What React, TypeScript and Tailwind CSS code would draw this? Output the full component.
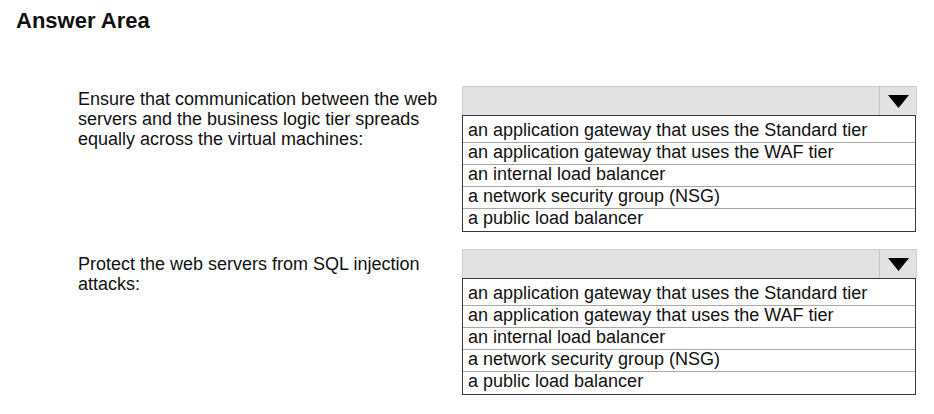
import React from 'react';

const options = [
  'an application gateway that uses the Standard tier',
  'an application gateway that uses the WAF tier',
  'an internal load balancer',
  'a network security group (NSG)',
  'a public load balancer',
];

const questions = [
  {
    label: 'Ensure that communication between the web servers and the business logic tier spreads equally across the virtual machines:',
    pad: 'pt-[3px]',
  },
  {
    label: 'Protect the web servers from SQL injection attacks:',
    pad: 'pt-[5px]',
  },
];

const Dropdown: React.FC = () => (
  <div className="w-[455px] flex flex-col">
    <div className="h-[29px] flex bg-[#e2e2e2] border border-[#cfcfcf] border-b-0">
      <div className="flex-1" />
      <div className="w-[37px] border-l border-[#c4c4c4] flex items-center justify-center">
        <svg width="21" height="13" viewBox="0 0 21 13">
          <polygon points="0,0 21,0 10.5,13" fill="#000" />
        </svg>
      </div>
    </div>
    <div className="w-[454px] border border-[#3a3a3a] bg-white pt-[5px]">
      {options.map((opt, i) => (
        <div
          key={opt}
          className={`h-[22px] pl-[5px] text-[18px] leading-[19px] text-[#111] ${i < options.length - 1 ? 'border-b border-[#a8a8a8]' : ''}`}
        >
          {opt}
        </div>
      ))}
    </div>
  </div>
);

export default function App() {
  return (
    <div className="w-[934px] h-[414px] bg-white" style={{ fontFamily: '"Liberation Sans", Arial, sans-serif' }}>
      <div className="pt-[8px] pl-[16px]">
        <h1 className="text-[22px] leading-[26px] font-bold text-[#111]">Answer Area</h1>
      </div>
      <div className="mt-[52px] flex flex-col gap-[17px]">
        {questions.map((q) => (
          <div key={q.label} className="flex pl-[78px]">
            <div className={`w-[384px] ${q.pad}`}>
              <p className="text-[18px] leading-[20px] text-[#111]">{q.label}</p>
            </div>
            <Dropdown />
          </div>
        ))}
      </div>
    </div>
  );
}
